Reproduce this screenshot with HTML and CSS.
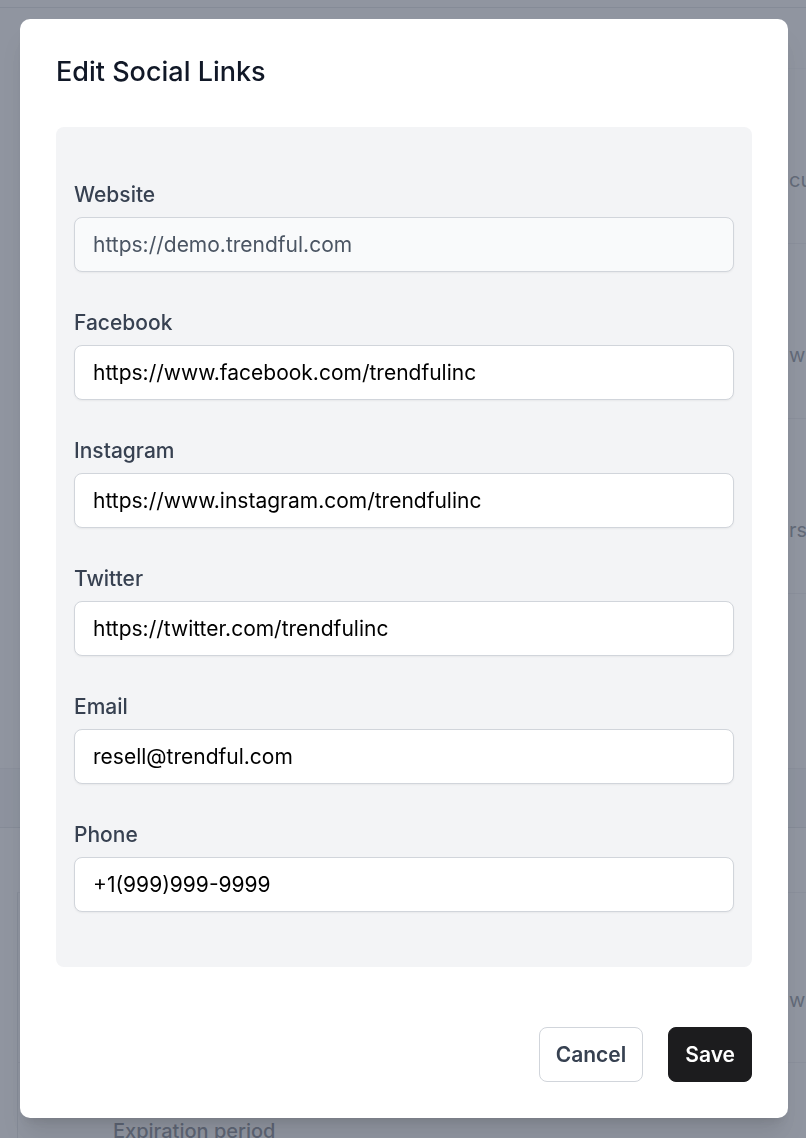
FILE: index.html
```html
<!DOCTYPE html>
<html lang="en">
<head>
<meta charset="utf-8">
<title>Edit Social Links</title>
<link rel="stylesheet" href="styles.css">
</head>
<body>
<div class="page">
  <div class="topbar"></div>
  <div class="page-head"></div>
  <div class="settings">
    <div class="row"><span class="row-text">custom domain settings</span></div>
    <div class="row"><span class="row-text">with your customers</span></div>
    <div class="row"><span class="row-text">rsions and history</span></div>
    <div class="row"><span class="row-text"></span></div>
  </div>
  <div class="band"></div>
  <div class="card">
    <div class="card-row card-row-first"><span class="row-text">when links expire</span></div>
    <div class="card-row card-row-second"><span class="card-label">Expiration period</span></div>
  </div>
</div>

<div class="overlay">
  <div class="modal" role="dialog" aria-labelledby="modal-title">
    <h2 class="modal-title" id="modal-title">Edit Social Links</h2>
    <form class="fields">
      <div class="field">
        <label class="field-label" for="website">Website</label>
        <input class="field-input field-input-readonly" id="website" type="text" value="https://demo.trendful.com" readonly>
      </div>
      <div class="field">
        <label class="field-label" for="facebook">Facebook</label>
        <input class="field-input" id="facebook" type="text" value="https://www.facebook.com/trendfulinc">
      </div>
      <div class="field">
        <label class="field-label" for="instagram">Instagram</label>
        <input class="field-input" id="instagram" type="text" value="https://www.instagram.com/trendfulinc">
      </div>
      <div class="field">
        <label class="field-label" for="twitter">Twitter</label>
        <input class="field-input" id="twitter" type="text" value="https://twitter.com/trendfulinc">
      </div>
      <div class="field">
        <label class="field-label" for="email">Email</label>
        <input class="field-input" id="email" type="text" value="resell@trendful.com">
      </div>
      <div class="field">
        <label class="field-label" for="phone">Phone</label>
        <input class="field-input" id="phone" type="text" value="+1(999)999-9999">
      </div>
    </form>
    <div class="actions">
      <button class="btn btn-secondary" type="button">Cancel</button>
      <button class="btn btn-primary" type="button">Save</button>
    </div>
  </div>
</div>
</body>
</html>
```

FILE: styles.css
```css
* {
  box-sizing: border-box;
}

html, body {
  margin: 0;
  padding: 0;
}

body {
  font-family: Inter, "Noto Sans", "Liberation Sans", sans-serif;
  background: #ffffff;
  color: #111827;
  width: 806px;
  height: 1138px;
  overflow: hidden;
}

/* ---------- background page ---------- */
.page {
  width: 806px;
}

.topbar {
  height: 8px;
  border-bottom: 1px solid #d1d5db;
}

.page-head {
  height: 60px;
}

.settings {
  margin-left: 60px;
}

.row {
  height: 175px;
  border-top: 1px solid #e5e7eb;
  padding: 99px 0 0 729px;
  font-size: 20px;
  line-height: 24px;
  color: #4b5563;
  white-space: nowrap;
  overflow: hidden;
}

.row:first-child {
  border-top-color: #f3f4f6;
}

.row-text {
  display: block;
  overflow: hidden;
}

.band {
  height: 60px;
  background: #f3f4f6;
  border-top: 1px solid #e5e7eb;
  border-bottom: 1px solid #d1d5db;
}

.card {
  margin-top: 64px;
  margin-left: 17px;
  border-left: 1px solid #d1d5db;
  border-top: 1px solid #e5e7eb;
}

.card-row {
  font-size: 20px;
  line-height: 24px;
  color: #4b5563;
  white-space: nowrap;
  overflow: hidden;
}

.card-row-first {
  height: 170px;
  padding: 95px 0 0 771px;
  border-bottom: 1px solid #e5e7eb;
}

.card-row-second {
  padding: 56px 0 0 95px;
}

.card-label {
  color: #374151;
  font-weight: 500;
}

/* ---------- overlay & modal ---------- */
.overlay {
  position: fixed;
  inset: 0;
  background: rgba(107, 114, 128, 0.75);
  display: flex;
  align-items: flex-start;
  padding: 19px 18px 0 20px;
}

.modal {
  width: 768px;
  background: #ffffff;
  border-radius: 10px;
  padding: 36px;
  box-shadow: 0 20px 25px -5px rgba(0, 0, 0, 0.1), 0 8px 10px -6px rgba(0, 0, 0, 0.1);
}

.modal-title {
  margin: 0;
  font-size: 27px;
  line-height: 34px;
  font-weight: 500;
  color: #111827;
}

.fields {
  margin: 38px 0 0;
  background: #f3f4f6;
  border-radius: 8px;
  padding: 54px 18px 55px;
  display: flex;
  flex-direction: column;
  gap: 37px;
}

.field {
  display: flex;
  flex-direction: column;
  gap: 8px;
}

.field-label {
  font-size: 21px;
  line-height: 28px;
  font-weight: 500;
  color: #374151;
}

.field-input {
  height: 55px;
  width: 100%;
  padding: 0 18px;
  border: 1px solid #d1d5db;
  border-radius: 8px;
  background: #ffffff;
  box-shadow: 0 1px 2px rgba(0, 0, 0, 0.05);
  font: inherit;
  font-size: 21px;
  color: #000000;
  outline: none;
}

.field-input-readonly {
  background: #f9fafb;
  color: #4b5563;
}

.actions {
  margin-top: 60px;
  display: flex;
  justify-content: flex-end;
  gap: 25px;
}

.btn {
  height: 55px;
  padding: 0 16px;
  border-radius: 8px;
  font-family: inherit;
  font-size: 21px;
  font-weight: 600;
  line-height: 1;
  cursor: pointer;
}

.btn-secondary {
  background: #ffffff;
  border: 1px solid #d1d5db;
  color: #374151;
}

.btn-primary {
  background: #1c1c1e;
  border: 1px solid #1c1c1e;
  color: #ffffff;
}
```
